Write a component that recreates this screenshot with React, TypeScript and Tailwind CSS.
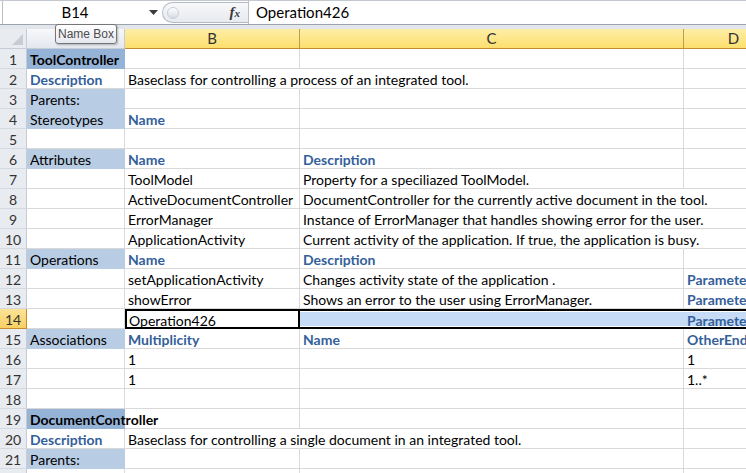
import React from "react";

type Kind = "plain" | "label" | "title";
type Fill = "none" | "light" | "dark" | "sel" | "active";

interface Cell {
  text?: string;
  kind?: Kind;
  fill?: Fill;
  spill?: boolean;
}

const c = (
  text?: string,
  kind: Kind = "plain",
  fill: Fill = "none",
  spill = false
): Cell => ({ text, kind, fill, spill });

const widths = ["w-[98px]", "w-[175px]", "w-[384px]", "w-[100px]"];

const kindClass: Record<Kind, string> = {
  plain: "text-black",
  label: "font-bold text-[#34609a]",
  title: "font-bold text-black",
};

const fillClass: Record<Fill, string> = {
  none: "border-r border-b border-[#d9d9d9] pl-[3px] pt-[1px]",
  light: "border-r border-b border-[#b8cce4] bg-[#b8cce4] pl-[3px] pt-[1px]",
  dark: "border-r border-b border-[#95b3d7] bg-[#95b3d7] pl-[3px] pt-[1px]",
  sel: "border-t-2 border-b-2 border-black bg-[#c5dbf6] pl-[3px] shadow-[inset_0_1px_0_#ffffff,inset_0_-1px_0_#ffffff]",
  active: "border-2 border-black bg-white pl-[2px]",
};

const rows: Cell[][] = [
  [c("ToolController", "title", "dark"), c(), c(), c()],
  [
    c("Description", "label"),
    c("Baseclass for controlling a process of an integrated tool.", "plain", "none", true),
    c(),
    c(),
  ],
  [c("Parents:", "plain", "light"), c(), c(), c()],
  [c("Stereotypes", "plain", "light"), c("Name", "label"), c(), c()],
  [c(), c(), c(), c()],
  [c("Attributes", "plain", "light"), c("Name", "label"), c("Description", "label"), c()],
  [c(), c("ToolModel"), c("Property for a speciliazed ToolModel."), c()],
  [
    c(),
    c("ActiveDocumentController"),
    c("DocumentController for the currently active document in the tool.", "plain", "none", true),
    c(),
  ],
  [
    c(),
    c("ErrorManager"),
    c("Instance of ErrorManager that handles showing error for the user.", "plain", "none", true),
    c(),
  ],
  [
    c(),
    c("ApplicationActivity"),
    c("Current activity of the application. If true, the application is busy.", "plain", "none", true),
    c(),
  ],
  [c("Operations", "plain", "light"), c("Name", "label"), c("Description", "label"), c()],
  [
    c(),
    c("setApplicationActivity"),
    c("Changes activity state of the application ."),
    c("Parameters", "label"),
  ],
  [
    c(),
    c("showError"),
    c("Shows an error to the user using ErrorManager."),
    c("Parameters", "label"),
  ],
  [c(), c("Operation426", "plain", "active"), c(undefined, "plain", "sel"), c("Parameters", "label", "sel")],
  [
    c("Associations", "plain", "light"),
    c("Multiplicity", "label"),
    c("Name", "label"),
    c("OtherEnd", "label"),
  ],
  [c(), c("1"), c(), c("1")],
  [c(), c("1"), c(), c("1..*")],
  [c(), c(), c(), c()],
  [c("DocumentController", "title", "dark", true), c(), c(), c()],
  [
    c("Description", "label"),
    c("Baseclass for controlling a single document in an integrated tool.", "plain", "none", true),
    c(),
    c(),
  ],
  [c("Parents:", "plain", "light"), c(), c(), c()],
  [c(), c(), c(), c()],
];

function FormulaBar() {
  return (
    <div className="flex h-[25px] border-t border-b border-[#c3c8d0] border-b-[#9aa3ae] bg-white pl-[2px]">
      <div className="flex w-[160px] items-center border-l border-[#b9bfc8]">
        <span className="flex-1 pr-[2px] text-center text-[15px] text-black">B14</span>
        <svg width="9" height="5" viewBox="0 0 9 5" className="mr-[4px]">
          <path d="M0 0h9L4.5 5z" fill="#3c3c3c" />
        </svg>
      </div>
      <div className="my-[1px] flex w-[86px] items-center rounded-l-full border border-r-0 border-[#b3bac4] bg-linear-to-b from-[#f7f8fa] to-[#e7eaee]">
        <div className="ml-[4px] h-[12px] w-[12px] rounded-full border border-[#c9ced6] bg-linear-to-b from-[#ffffff] to-[#d6dbe2]" />
        <span className="ml-auto mr-[8px] font-['Liberation_Serif',serif] text-[15px] font-bold italic text-[#3a3a3a]">
          f<span className="text-[11px]">x</span>
        </span>
      </div>
      <div className="flex flex-1 items-center border-l border-[#b9bfc8] pl-[7px] text-[15px] text-black">
        Operation426
      </div>
    </div>
  );
}

function HeaderRow() {
  const yellow =
    "border-r border-b border-[#c39b4e] border-b-[#c48c2f] bg-linear-to-b from-[#fdeea6] to-[#fddf6c] text-center text-[15px] leading-[19px] text-[#333333]";
  return (
    <div className="flex h-[20px]">
      <div className="relative w-[27px] shrink-0 border-r border-b border-[#c5ccd5] bg-[#e8ebef]">
        <svg width="11" height="11" viewBox="0 0 11 11" className="absolute bottom-[3px] right-[3px]">
          <path d="M11 0v11H0z" fill="#c8ccd2" />
        </svg>
      </div>
      <div className="w-[98px] shrink-0 border-r border-b border-[#c5ccd5] bg-linear-to-b from-[#f7f8fa] to-[#e4e8ee] text-center text-[15px] leading-[19px] text-[#333333]">
        A
      </div>
      <div className={`w-[175px] shrink-0 ${yellow}`}>B</div>
      <div className={`w-[384px] shrink-0 ${yellow}`}>C</div>
      <div className={`w-[100px] shrink-0 ${yellow}`}>D</div>
    </div>
  );
}

export default function App() {
  return (
    <div className="relative h-[473px] w-[746px] overflow-hidden bg-white font-['Lato',sans-serif]">
      <FormulaBar />
      <div className="h-[4px] bg-[#e3e6ea]" />
      <HeaderRow />

      {rows.map((row, i) => {
        const current = i === 13;
        return (
          <div key={i} className="flex h-[20px]">
            <div
              className={
                current
                  ? "w-[27px] shrink-0 border-r border-b border-[#c48c2f] bg-linear-to-b from-[#fbe396] to-[#f8d062] pt-[1px] text-center text-[14px] leading-[19px] text-[#333333]"
                  : "w-[27px] shrink-0 border-r border-b border-[#c5ccd5] border-b-[#d5dae1] bg-[#e8ebef] pt-[1px] text-center text-[14px] leading-[19px] text-[#333333]"
              }
            >
              {i + 1}
            </div>
            {row.map((cell, j) => (
              <div
                key={j}
                className={`${widths[j]} shrink-0 whitespace-nowrap text-[14px] leading-[19px] ${
                  fillClass[cell.fill ?? "none"]
                } ${cell.spill ? "overflow-visible border-r-transparent" : "overflow-hidden"} ${
                  kindClass[cell.kind ?? "plain"]
                }`}
              >
                {cell.text && <span className="relative z-10">{cell.text}</span>}
              </div>
            ))}
          </div>
        );
      })}

      {/* Name Box tooltip */}
      <div className="absolute left-[55px] top-[24px] z-20 flex h-[20px] w-[62px] items-center justify-center rounded-[3px] border border-[#767676] bg-linear-to-b from-[#ffffff] to-[#e6e8ef] font-['Liberation_Sans',sans-serif] text-[12px] text-[#4c4c4c] shadow-[1px_1px_2px_rgba(0,0,0,0.25)]">
        Name Box
      </div>
    </div>
  );
}
